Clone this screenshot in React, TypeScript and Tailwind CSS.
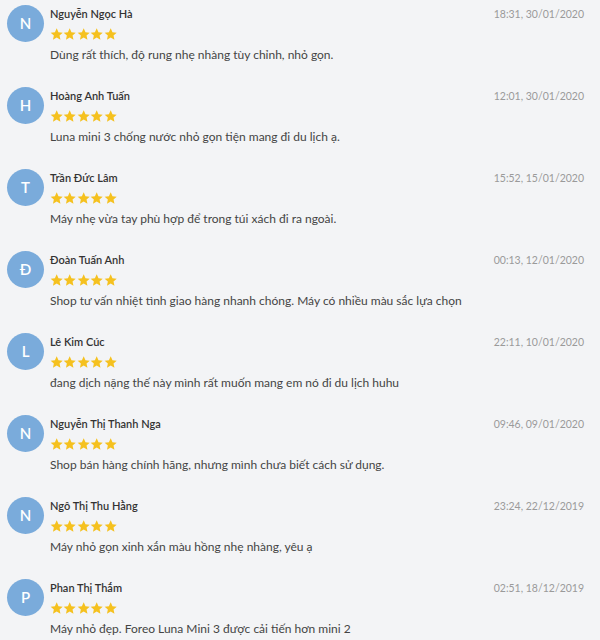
import React from "react";

const reviews = [
  { n: "N", name: "Nguyễn Ngọc Hà", date: "18:31, 30/01/2020", text: "Dùng rất thích, độ rung nhẹ nhàng tùy chỉnh, nhỏ gọn." },
  { n: "H", name: "Hoàng Anh Tuấn", date: "12:01, 30/01/2020", text: "Luna mini 3 chống nước nhỏ gọn tiện mang đi du lịch ạ." },
  { n: "T", name: "Trần Đức Lâm", date: "15:52, 15/01/2020", text: "Máy nhẹ vừa tay phù hợp để trong túi xách đi ra ngoài." },
  { n: "Đ", name: "Đoàn Tuấn Anh", date: "00:13, 12/01/2020", text: "Shop tư vấn nhiệt tình giao hàng nhanh chóng. Máy có nhiều màu sắc lựa chọn" },
  { n: "L", name: "Lê Kim Cúc", date: "22:11, 10/01/2020", text: "đang dịch nặng thế này mình rất muốn mang em nó đi du lịch huhu" },
  { n: "N", name: "Nguyễn Thị Thanh Nga", date: "09:46, 09/01/2020", text: "Shop bán hàng chính hãng, nhưng mình chưa biết cách sử dụng." },
  { n: "N", name: "Ngô Thị Thu Hằng", date: "23:24, 22/12/2019", text: "Máy nhỏ gọn xinh xắn màu hồng nhẹ nhàng, yêu ạ" },
  { n: "P", name: "Phan Thị Thắm", date: "02:51, 18/12/2019", text: "Máy nhỏ đẹp. Foreo Luna Mini 3 được cải tiến hơn mini 2" },
];

function Star() {
  return (
    <svg width="13.4" height="13" viewBox="0 0 24 23.3" className="block">
      <path
        fill="#f5c11f"
        d="M12 0.5l3.2 7 7.6.8-5.7 5.1 1.6 7.6L12 17.1l-6.7 3.9 1.6-7.6L1.2 8.3l7.6-.8z"
      />
    </svg>
  );
}

export default function App() {
  return (
    <div
      className="w-[600px] h-[640px] overflow-hidden bg-[#f3f4f6] text-[#333]"
      style={{ fontFamily: "Lato, 'Noto Sans', sans-serif" }}
    >
      {reviews.map((r, i) => (
        <div key={i} className="flex h-[82px] pl-[7px] pr-[16px] pt-[7px]">
          <div className="mt-[-2px] w-[37px] h-[37px] shrink-0 rounded-full bg-[#7aabdb] flex items-center justify-center text-white text-[15px] font-semibold">
            {r.n}
          </div>
          <div className="ml-[6px] flex-1 min-w-0">
            <div className="flex justify-between items-center h-[14px]">
              <span className="text-[11px] font-semibold text-[#333] leading-[14px]">{r.name}</span>
              <span className="text-[10.5px] text-[#9a9a9a] leading-[14px]">{r.date}</span>
            </div>
            <div className="flex mt-[7px]">
              {[0, 1, 2, 3, 4].map((s) => (
                <Star key={s} />
              ))}
            </div>
            <div className="mt-[6px] text-[12px] leading-[16px] text-[#444]">{r.text}</div>
          </div>
        </div>
      ))}
    </div>
  );
}
